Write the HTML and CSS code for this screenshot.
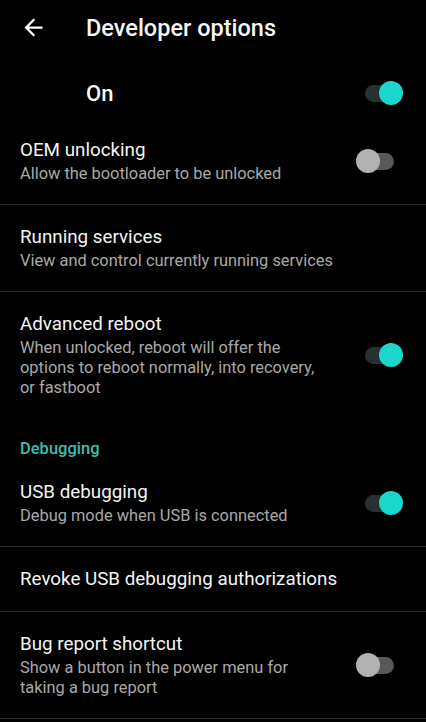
FILE: index.html
```html
<!DOCTYPE html>
<html>
<head>
<meta charset="utf-8">
<link rel="stylesheet" href="styles.css">
</head>
<body>
<div class="screen">
  <header class="toolbar">
    <svg class="back" viewBox="0 0 24 24" width="27" height="27"><path d="M20 11H7.83l5.59-5.59L12 4l-8 8 8 8 1.41-1.41L7.83 13H20v-2z" fill="#fff"/></svg>
    <h1 class="title">Developer options</h1>
  </header>

  <div class="master">
    <span class="master-label">On</span>
    <div class="switch on"><span class="track"></span><span class="thumb"></span></div>
  </div>

  <div class="row">
    <div class="text">
      <div class="t">OEM unlocking</div>
      <div class="s">Allow the bootloader to be unlocked</div>
    </div>
    <div class="switch"><span class="track"></span><span class="thumb"></span></div>
  </div>
  <div class="divider"></div>

  <div class="row">
    <div class="text">
      <div class="t">Running services</div>
      <div class="s">View and control currently running services</div>
    </div>
  </div>
  <div class="divider"></div>

  <div class="row">
    <div class="text">
      <div class="t">Advanced reboot</div>
      <div class="s">When unlocked, reboot will offer the options to reboot normally, into recovery, or fastboot</div>
    </div>
    <div class="switch on"><span class="track"></span><span class="thumb"></span></div>
  </div>

  <div class="category">Debugging</div>

  <div class="row">
    <div class="text">
      <div class="t">USB debugging</div>
      <div class="s">Debug mode when USB is connected</div>
    </div>
    <div class="switch on"><span class="track"></span><span class="thumb"></span></div>
  </div>
  <div class="divider"></div>

  <div class="row">
    <div class="text">
      <div class="t">Revoke USB debugging authorizations</div>
    </div>
  </div>
  <div class="divider"></div>

  <div class="row">
    <div class="text">
      <div class="t">Bug report shortcut</div>
      <div class="s">Show a button in the power menu for taking a bug report</div>
    </div>
    <div class="switch"><span class="track"></span><span class="thumb"></span></div>
  </div>
  <div class="divider"></div>
</div>
</body>
</html>
```

FILE: styles.css
```css
html, body {
  margin: 0;
  padding: 0;
  background: #000;
}
body {
  font-family: Roboto, "Noto Sans", sans-serif;
  color: #f2f2f2;
  width: 426px;
  height: 722px;
  overflow: hidden;
}
.screen {
  display: flex;
  flex-direction: column;
}
.toolbar {
  height: 56px;
  display: flex;
  align-items: center;
}
.back {
  margin-left: 20px;
  margin-top: -1px;
}
.title {
  margin: 0 0 0 39px;
  font-size: 23.5px;
  font-weight: 500;
  line-height: 56px;
  color: #f7f7f7;
}
.master {
  height: 50px;
  padding: 12px 23px 0 86px;
  display: flex;
  align-items: center;
  justify-content: space-between;
}
.master-label {
  font-size: 22px;
  font-weight: 500;
  color: #f7f7f7;
}
.row {
  display: flex;
  align-items: center;
  padding: 20px 23px 20px 20px;
  gap: 31px;
}
.text {
  flex: 1;
  min-width: 0;
}
.t {
  font-size: 18.8px;
  line-height: 24px;
  color: #f4f4f4;
  white-space: nowrap;
}
.s {
  margin-top: 2px;
  font-size: 16.4px;
  line-height: 20px;
  color: #a9a9a9;
}
.divider {
  height: 1px;
  background: #2c2c2c;
}
.category {
  padding: 21px 20px 1px 20px;
  font-size: 16.5px;
  line-height: 20px;
  font-weight: 500;
  color: #3ebdb0;
}
.switch {
  position: relative;
  width: 47px;
  height: 24px;
  flex: none;
}
.track {
  position: absolute;
  left: 9px;
  right: 9px;
  top: 3.5px;
  height: 17px;
  border-radius: 9px;
  background: #585858;
}
.switch.on .track {
  background: #263232;
}
.thumb {
  position: absolute;
  top: 0;
  left: 0;
  width: 24px;
  height: 24px;
  border-radius: 50%;
  background: #b2b2b2;
}
.switch.on .thumb {
  left: auto;
  right: 0;
  background: #1bd6cb;
}
```
